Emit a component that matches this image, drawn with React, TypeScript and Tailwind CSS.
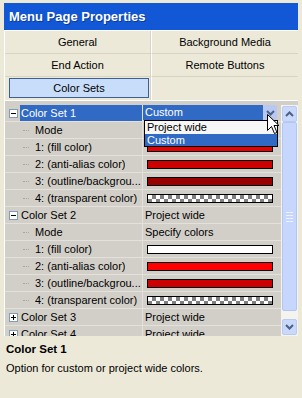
import React from "react"

type Swatch = "white" | "red" | "mid" | "dark" | "checker" | "bright"

interface RowProps {
  label: string
  category?: boolean
  expanded?: boolean
  selected?: boolean
  value?: string
  swatch?: Swatch
  combo?: boolean
}

const swatchClass: Record<Swatch, string> = {
  white: "bg-white",
  bright: "bg-[#ff0000]",
  red: "bg-[#e80000]",
  mid: "bg-[#cc0000]",
  dark: "bg-[#990000]",
  checker:
    "bg-white bg-[image:repeating-conic-gradient(#7f7f7f_0%_25%,#ffffff_0%_50%)] bg-[length:8px_8px]",
}

function Expander({ open }: { open: boolean }) {
  return (
    <div className="relative flex h-[9px] w-[9px] items-center justify-center border border-[#7f9db9] bg-white">
      <div className="h-px w-[5px] bg-black" />
      {!open && <div className="absolute h-[5px] w-px bg-black" />}
    </div>
  )
}

function Row({ label, category, expanded, selected, value, swatch, combo }: RowProps) {
  return (
    <div className="flex h-[17px] shrink-0 border-b border-[#e3e1db]">
      {/* gutter */}
      <div className="flex w-[15px] items-center justify-center pl-[2px]">
        {category && <Expander open={!!expanded} />}
      </div>
      {/* label */}
      <div
        className={
          "flex w-[123px] items-center overflow-hidden whitespace-nowrap border-r border-[#e3e1db] " +
          (selected ? "bg-[#316ac5] text-white" : "")
        }
      >
        {category ? (
          <span className="pl-[1px]">{label}</span>
        ) : (
          <>
            <div className="ml-[3px] mr-[6px] w-[6px] border-t border-dotted border-[#a8a59d]" />
            <span className="truncate">{label}</span>
          </>
        )}
      </div>
      {/* value */}
      <div className="flex min-w-0 flex-1 items-center">
        {combo ? (
          <div className="flex h-full w-[134px] items-stretch pb-[1px]">
            <div className="flex flex-1 items-center bg-[#316ac5] pl-[2px] text-white">Custom</div>
            <div className="flex w-[14px] items-center justify-center rounded-[2px] bg-[#b7c8f2]">
              <svg width="9" height="6" viewBox="0 0 9 6">
                <path d="M1 1 L4.5 4.5 L8 1" fill="none" stroke="#4d6185" strokeWidth="2" />
              </svg>
            </div>
          </div>
        ) : swatch ? (
          <div className={"ml-[4px] h-[9px] w-[126px] border border-black " + swatchClass[swatch]} />
        ) : (
          <span className="pl-[2px] whitespace-nowrap">{value}</span>
        )}
      </div>
    </div>
  )
}

function ScrollArrow({ up }: { up?: boolean }) {
  return (
    <div className="flex h-[16px] w-[15px] items-center justify-center rounded-[2px] border border-[#b9caf0] bg-[#c9d8fb]">
      <svg width="9" height="6" viewBox="0 0 9 6">
        <path
          d={up ? "M1 5 L4.5 1.5 L8 5" : "M1 1 L4.5 4.5 L8 1"}
          fill="none"
          stroke="#4d6185"
          strokeWidth="2"
        />
      </svg>
    </div>
  )
}

function Scrollbar() {
  return (
    <div className="flex w-[17px] flex-col items-center bg-[#f4f3ee] pt-[1px] pb-[1px]">
      <ScrollArrow up />
      {/* thumb */}
      <div className="flex h-[189px] w-[15px] flex-col items-center justify-center gap-[2px] rounded-[2px] border border-[#b2c6f2] bg-[#c6d6fc]">
        <div className="h-px w-[7px] bg-[#eef3ff]" />
        <div className="h-px w-[7px] bg-[#eef3ff]" />
        <div className="h-px w-[7px] bg-[#eef3ff]" />
        <div className="h-px w-[7px] bg-[#eef3ff]" />
      </div>
      <div className="flex-1" />
      <ScrollArrow />
    </div>
  )
}

function Tabs() {
  const cell = "flex h-[23px] items-center justify-center border-b border-[#d8d4c3]"
  return (
    <div className="grid grid-cols-[146px_1fr] border-l border-t border-white">
      <div className={cell + " border-r border-[#d8d4c3]"}>General</div>
      <div className={cell + " border-l border-l-white"}>Background Media</div>
      <div className={cell + " border-r border-[#d8d4c3]"}>End Action</div>
      <div className={cell + " border-l border-l-white"}>Remote Buttons</div>
      <div className="flex h-[23px] items-start border-r border-[#d8d4c3] pl-[4px] pr-[1px] pt-[1px]">
        <div className="flex h-[20px] flex-1 items-center justify-center border border-[#3f5e92] bg-[#c8ddf9]">
          Color Sets
        </div>
      </div>
      <div className="h-[23px] border-l border-l-white" />
    </div>
  )
}

export default function App() {
  return (
    <div className="relative h-[398px] w-[302px] overflow-hidden bg-[#ece9d8] px-[4px] pt-[3px] font-['Liberation_Sans',Arial,sans-serif] text-[11px] leading-[13px] text-black">
      <div className="flex h-[27px] items-center bg-[#1257d6] pl-[5px] text-[13px] font-bold text-white [text-shadow:1px_1px_0_#0a3b98]">
        Menu Page Properties
      </div>

      <Tabs />

      {/* property grid */}
      <div className="flex h-[236px] border-l border-t border-white bg-[#d2cfc8] pt-[4px]">
        <div className="flex flex-1 flex-col overflow-hidden">
          <Row label="Color Set 1" category expanded selected combo />
          <Row label="Mode" />
          <Row label="1: (fill color)" swatch="red" />
          <Row label="2: (anti-alias color)" swatch="mid" />
          <Row label="3: (outline/backgrou..." swatch="dark" />
          <Row label="4: (transparent color)" swatch="checker" />
          <Row label="Color Set 2" category expanded value="Project wide" />
          <Row label="Mode" value="Specify colors" />
          <Row label="1: (fill color)" swatch="white" />
          <Row label="2: (anti-alias color)" swatch="bright" />
          <Row label="3: (outline/backgrou..." swatch="mid" />
          <Row label="4: (transparent color)" swatch="checker" />
          <Row label="Color Set 3" category value="Project wide" />
          <Row label="Color Set 4" category value="Project wide" />
        </div>
        <Scrollbar />
      </div>

      {/* description */}
      <div className="pl-[2px] pt-[6px]">
        <div className="text-[11.5px] font-bold leading-[14px]">Color Set 1</div>
        <div className="mt-[5px] leading-[14px]">Option for custom or project wide colors.</div>
      </div>

      {/* open combo list */}
      <div className="absolute left-[144px] top-[120px] w-[134px] border border-black bg-[#f6f6f6]">
        <div className="flex h-[13px] items-center pl-[2px]">Project wide</div>
        <div className="flex h-[12px] items-center bg-[#316ac5] pl-[2px] text-white">Custom</div>
      </div>

      {/* mouse pointer */}
      <svg className="absolute left-[267px] top-[114px]" width="13" height="21" viewBox="0 0 13 21">
        <path
          d="M0.5 0.5 L0.5 16.5 L4.5 12.5 L7.5 19.5 L10 18.5 L7 11.5 L12 11.5 Z"
          fill="white"
          stroke="black"
          strokeWidth="1"
        />
      </svg>
    </div>
  )
}
